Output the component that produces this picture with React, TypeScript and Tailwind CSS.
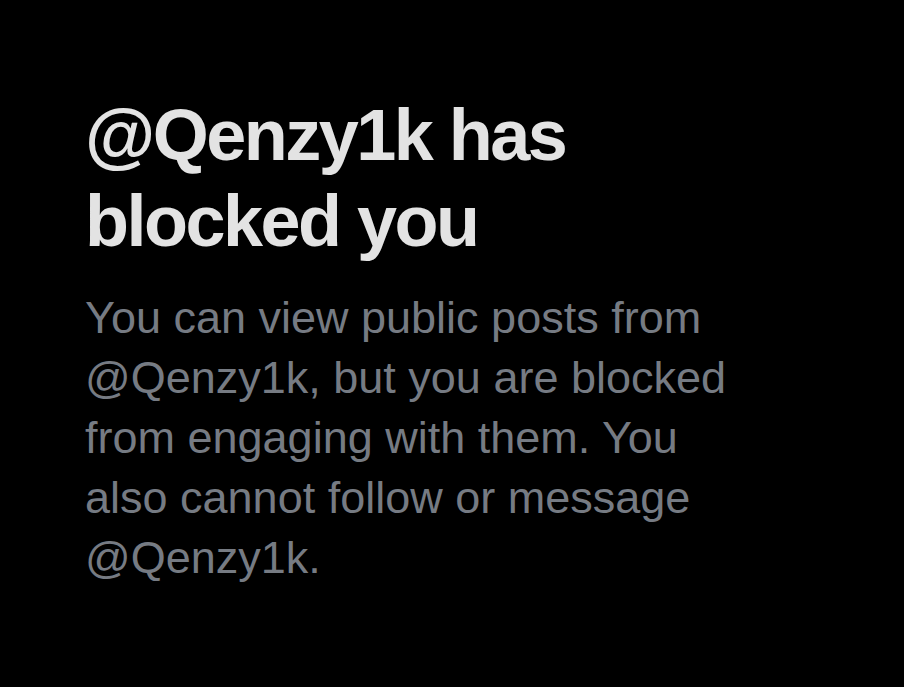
export default function App() {
  const handle = "@Qenzy1k";

  return (
    <div className="min-h-[687px] w-full bg-black pl-[85px] pt-[92px] font-['Liberation_Sans',Arial,sans-serif]">
      {/* blocked notice */}
      <h1 className="text-[72px] font-bold leading-[86px] tracking-[-0.035em] text-[#e3e3e3]">
        {handle} has
        <br />
        blocked you
      </h1>
      <p className="mt-[24px] text-[45px] leading-[60px] text-[#767b83]">
        You can view public posts from
        <br />
        {handle}, but you are blocked
        <br />
        from engaging with them. You
        <br />
        also cannot follow or message
        <br />
        {handle}.
      </p>
    </div>
  );
}
